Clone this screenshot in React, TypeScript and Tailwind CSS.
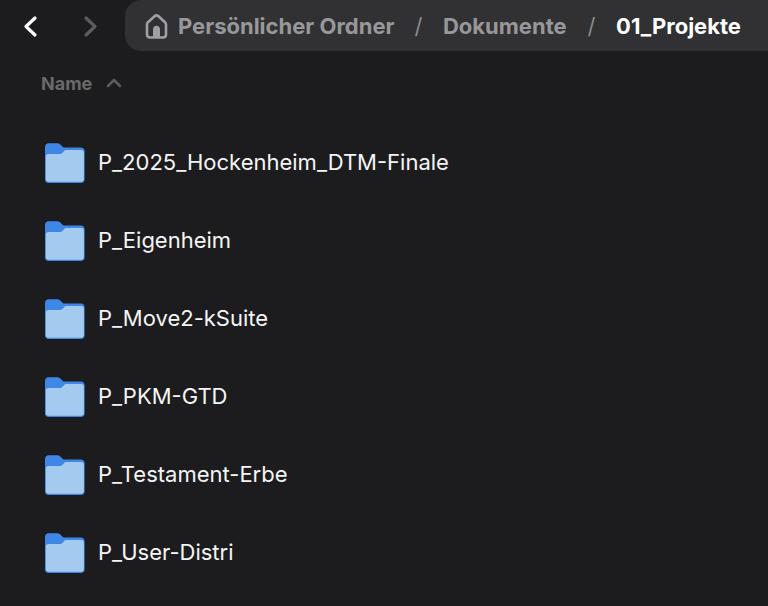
const FOLDERS = [
  'P_2025_Hockenheim_DTM-Finale',
  'P_Eigenheim',
  'P_Move2-kSuite',
  'P_PKM-GTD',
  'P_Testament-Erbe',
  'P_User-Distri',
]

function FolderIcon() {
  return (
    <svg width="40" height="40" viewBox="0 0 40 40" className="mt-[2px] shrink-0">
      <path d="M0 4C0 1.800 1.500 0.200 3.700 0.200H12C13.500 0.200 14.500 0.700 15.500 1.700L18.300 4.500H36C38 4.500 39.600 6.100 39.600 8.100V36.500C39.600 38.500 38 40 36 40H3.600C1.500 40 0 38.500 0 36.500Z" fill="#3f87e6" />
      <path d="M0.800 13.500C0.800 12 1.800 11 3.300 11H14.500C15.800 11 16.800 10.500 17.600 9.700L19.600 7.600C20 7.200 20.500 7 21 7H36.500C38 7 38.900 8 38.900 9.500V36C38.900 37.600 37.900 38.700 36.300 38.700H3.400C1.800 38.700 0.800 37.600 0.800 36Z" fill="#a5caef" />
    </svg>
  )
}

function HomeIcon() {
  return (
    <svg width="24" height="26" viewBox="0 0 24 26" fill="none" stroke="#a0a0a2" strokeWidth="2.600" strokeLinejoin="round" className="shrink-0">
      <path d="M3 11.500C3 10.500 3.400 9.800 4 9.200L10.500 3.300C11.700 2.200 13.300 2.200 14.500 3.300L21 9.200C21.600 9.800 22 10.500 22 11.500V21.500C22 23.300 21 24.500 19 24.500H6C4 24.500 3 23.300 3 21.500Z" />
      <path d="M9 24V16C9 14.100 10.600 12.800 12.500 12.800C14.400 12.800 16 14.100 16 16V24Z" fill="#a0a0a2" stroke="none" />
    </svg>
  )
}

export default function App() {
  return (
    <div className="h-[606px] w-[768px] overflow-hidden bg-[#1c1c1e] font-['Inter',sans-serif]">
      {/* Toolbar */}
      <div className="flex h-[51px] items-center">
        <div className="flex w-[125px] items-center pl-[22px]">
          <svg width="18" height="26" viewBox="0 0 18 26" fill="none" stroke="#ffffff" strokeWidth="3.200" strokeLinecap="round" strokeLinejoin="round">
            <path d="M13 5L4 13.500L13 22" />
          </svg>
          <svg width="18" height="26" viewBox="0 0 18 26" fill="none" stroke="#5c5c5e" strokeWidth="3.200" strokeLinecap="round" strokeLinejoin="round" className="ml-[41px]">
            <path d="M5 5L14 13.500L5 22" />
          </svg>
        </div>
        <div className="flex h-[51px] flex-1 items-center rounded-l-[16px] bg-[#313133] pl-[19px] text-[22px] font-bold text-[#98989a]">
          <HomeIcon />
          <span className="ml-[10px] pt-[1px]">Persönlicher Ordner</span>
          <span className="ml-[20px] pt-[1px] font-normal text-[#8a8a8c]">/</span>
          <span className="ml-[20.5px] pt-[1px]">Dokumente</span>
          <span className="ml-[21px] pt-[1px] font-normal text-[#8a8a8c]">/</span>
          <span className="ml-[20.5px] pt-[1px] text-white">01_Projekte</span>
        </div>
      </div>

      {/* Sort header */}
      <div className="flex h-[64px] items-center pl-[41px] text-[18px] font-bold text-[#69696b]">
        <span>Name</span>
        <svg width="16" height="10" viewBox="0 0 16 10" fill="none" stroke="#5c5c5e" strokeWidth="2.500" strokeLinecap="round" strokeLinejoin="round" className="ml-[14px]">
          <path d="M2 8L8 2L14 8" />
        </svg>
      </div>

      {/* Folder list */}
      <div className="mt-[8px] flex flex-col">
        {FOLDERS.map(name => (
          <div key={name} className="flex h-[78px] items-center pl-[45px]">
            <FolderIcon />
            <span className="ml-[13px] pt-[1px] text-[22px] text-[#f5f5f5]">{name}</span>
          </div>
        ))}
      </div>
    </div>
  )
}
